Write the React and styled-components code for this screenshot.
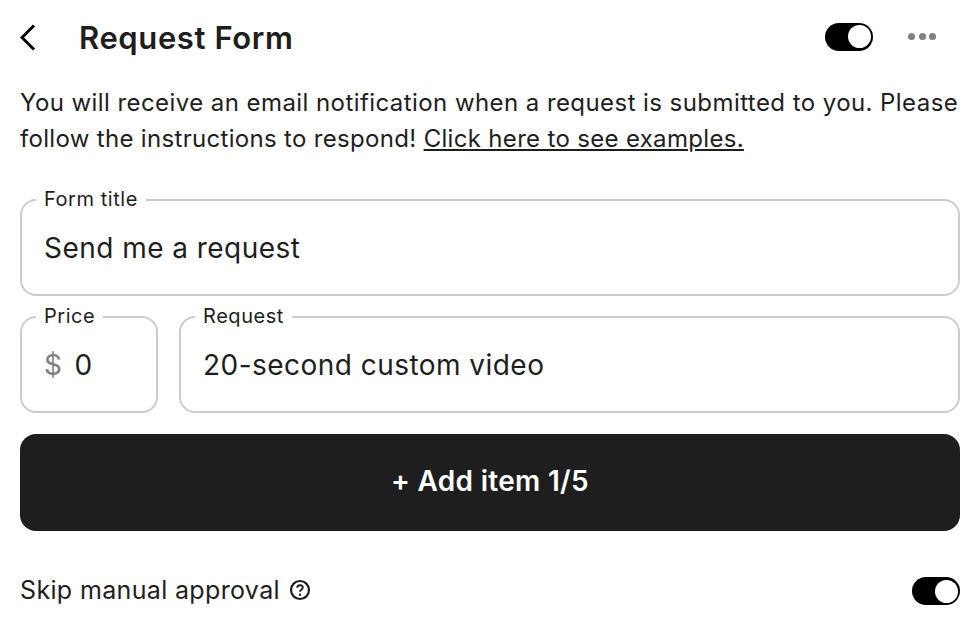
import styled, { createGlobalStyle } from 'styled-components';

const GlobalStyle = createGlobalStyle`
  html, body {
    margin: 0;
    padding: 0;
    background: #fff;
  }
  body {
    font-family: Inter, "Open Sans", "Liberation Sans", sans-serif;
    color: #1e1e1e;
  }
`;

const Page = styled.div`
  width: 980px;
  height: 644px;
  box-sizing: border-box;
  padding: 12px 20px 0;
  overflow: hidden;
  display: flex;
  flex-direction: column;
`;

const Header = styled.header`
  height: 52px;
  display: flex;
  align-items: center;
`;

const BackButton = styled.button`
  width: 59px;
  height: 52px;
  padding: 0;
  border: 0;
  background: none;
  display: flex;
  align-items: center;
`;

const Title = styled.h1`
  margin: 0;
  flex: 1;
  font-size: 31px;
  line-height: 52px;
  font-weight: 600;
  letter-spacing: 0.6px;
`;

const Actions = styled.div`
  display: flex;
  align-items: center;
  margin-bottom: 3px;
`;

const Toggle = styled.span`
  width: 48px;
  height: 28px;
  border-radius: 14px;
  background: #000;
  display: flex;
  align-items: center;
  justify-content: flex-end;
  padding: 0 2px;
  box-sizing: border-box;

  &::after {
    content: '';
    width: 23px;
    height: 23px;
    border-radius: 50%;
    background: #fff;
  }
`;

const MoreButton = styled.span`
  margin: 0 24px 0 35px;
  display: flex;
  gap: 3.5px;

  i {
    width: 7px;
    height: 7px;
    border-radius: 50%;
    background: #808080;
  }
`;

const Intro = styled.p`
  margin: 21px 0 0;
  font-size: 24px;
  line-height: 36px;
  letter-spacing: 0.43px;
  white-space: nowrap;

  a {
    color: inherit;
    text-decoration: underline;
  }
`;

const IntroLine = styled.span`
  letter-spacing: 0.32px;
`;

const Field = styled.fieldset`
  margin: 0;
  padding: 0 22px;
  min-width: 0;
  height: 107px;
  box-sizing: border-box;
  border: 2px solid #cccccc;
  border-radius: 16px;
  flex: ${(p) => p.$flex || '0 0 auto'};
  width: ${(p) => (p.$width ? `${p.$width}px` : 'auto')};
  display: flex;
`;

const Label = styled.legend`
  padding: 0 8px 2px;
  margin-left: -8px;
  font-size: 20px;
  line-height: 20px;
  letter-spacing: 0.55px;
  color: #1e1e1e;
`;

const Value = styled.div`
  font-size: 28px;
  line-height: 40px;
  letter-spacing: 0.46px;
  margin-top: 17px;
  color: #1e1e1e;
`;

const Currency = styled.span`
  color: #808080;
  margin-right: 12px;
`;

const FirstField = styled.div`
  margin-top: 32px;
`;

const FieldRow = styled.div`
  display: flex;
  gap: 21px;
  margin-top: 10px;
`;

const AddButton = styled.button`
  margin-top: 21px;
  height: 97px;
  width: 100%;
  padding: 0 0 3px;
  border: 0;
  border-radius: 16px;
  background: #1e1e1e;
  color: #fff;
  font-family: inherit;
  font-size: 28px;
  font-weight: 600;
  letter-spacing: 0.3px;
`;

const OptionRow = styled.div`
  margin-top: 46px;
  display: flex;
  align-items: center;
  justify-content: space-between;
  height: 28px;
`;

const OptionLabel = styled.span`
  display: flex;
  align-items: center;
  gap: 9px;
  margin-bottom: 2px;
  font-size: 25px;
  letter-spacing: 0.35px;
`;

export default function App() {
  return (
    <>
      <GlobalStyle />
      <Page>
        <Header>
          <BackButton aria-label="Back">
            <svg width="18" height="28" viewBox="0 0 18 28" fill="none">
              <path d="M14 1.5 2 13.5l12 12" stroke="#000" strokeWidth="3" />
            </svg>
          </BackButton>
          <Title>Request Form</Title>
          <Actions>
            <Toggle />
            <MoreButton>
              <i />
              <i />
              <i />
            </MoreButton>
          </Actions>
        </Header>
        <Intro>
          You will receive an email notification when a request is submitted to you. Please
          <br />
          <IntroLine>
            follow the instructions to respond! <a href="#examples">Click here to see examples.</a>
          </IntroLine>
        </Intro>
        <FirstField>
          <Field>
            <Label>Form title</Label>
            <Value>Send me a request</Value>
          </Field>
        </FirstField>
        <FieldRow>
          <Field $width={138}>
            <Label>Price</Label>
            <Value>
              <Currency>$</Currency>0
            </Value>
          </Field>
          <Field $flex="1">
            <Label>Request</Label>
            <Value>20-second custom video</Value>
          </Field>
        </FieldRow>
        <AddButton>+ Add item 1/5</AddButton>
        <OptionRow>
          <OptionLabel>
            Skip manual approval
            <svg width="22" height="22" viewBox="0 0 22 22" fill="none">
              <circle cx="11" cy="11" r="9" stroke="#1e1e1e" strokeWidth="2.2" />
              <path d="M8.2 8.8c0-1.6 1.2-2.6 2.8-2.6s2.8 1 2.8 2.4c0 2.2-2.8 2.2-2.8 4.2" stroke="#1e1e1e" strokeWidth="1.9" />
              <circle cx="11" cy="15.8" r="1.2" fill="#1e1e1e" />
            </svg>
          </OptionLabel>
          <Toggle />
        </OptionRow>
      </Page>
    </>
  );
}
